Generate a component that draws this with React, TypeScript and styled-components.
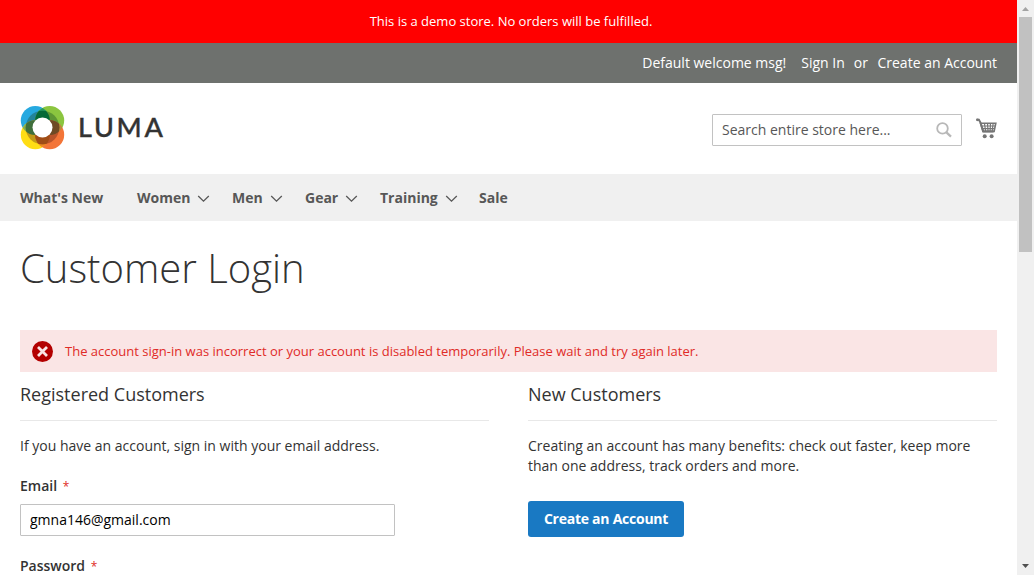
import React from "react";
import styled, { createGlobalStyle } from "styled-components";

const GlobalStyle = createGlobalStyle`
  *, *::before, *::after { box-sizing: border-box; }
  html, body { margin: 0; padding: 0; overflow: hidden; background: #fff; }
  body { font-family: "Open Sans", "Noto Sans", sans-serif; font-size: 14px; line-height: 20px; color: #333; }
  h1, h2, p { margin: 0; }
  svg { display: block; flex: none; }
`;

const Window = styled.div`
  display: flex;
  width: 1034px;
  height: 575px;
  overflow: hidden;
`;

const Page = styled.div`
  width: 1017px;
  flex: none;
`;

const DemoNotice = styled.div`
  height: 43px;
  background: #ff0000;
  color: #fff;
  font-size: 13px;
  line-height: 43px;
  text-align: center;
  padding-left: 5px;
`;

const AccountBar = styled.div`
  height: 40px;
  background: #6e716e;
  color: #fff;
  display: flex;
  justify-content: flex-end;
  padding: 10px 20px 0 0;
`;

const AccountItem = styled.span<{ $gap?: number }>`
  margin-left: ${(p) => p.$gap ?? 0}px;
  white-space: nowrap;
`;

const Header = styled.header`
  height: 91px;
  display: flex;
  align-items: flex-start;
  padding: 22px 20px 0;
`;

const Brand = styled.a`
  display: flex;
  align-items: center;
  height: 45px;
  flex: 1;
`;

const BrandName = styled.span`
  margin-left: 11px;
  font-family: Lato, sans-serif;
  font-size: 27px;
  font-weight: 500;
  line-height: 43px;
  height: 45px;
  letter-spacing: 2.7px;
  color: #333;
  -webkit-text-stroke: 0.4px #333;
`;

const SearchBox = styled.div`
  display: flex;
  align-items: center;
  justify-content: space-between;
  width: 250px;
  height: 32px;
  margin-top: 9px;
  padding: 0 9px;
  border: 1px solid #c2c2c2;
  border-radius: 1px;
  color: #575757;
`;

const CartLink = styled.a`
  margin: 13px 0 0 14px;
`;

const Nav = styled.nav`
  display: flex;
  height: 47px;
  padding: 14px 20px 0;
  background: #f0f0f0;
`;

const NavItem = styled.a<{ $width: number }>`
  display: flex;
  width: ${(p) => p.$width}px;
  font-weight: 700;
  color: #575757;
  white-space: nowrap;
  svg { margin: 7px 0 0 7px; }
`;

const Main = styled.main`
  padding: 25px 20px 0;
`;

const Title = styled.h1`
  height: 84px;
  font-size: 40px;
  line-height: 44px;
  font-weight: 300;
`;

const ErrorMessage = styled.div`
  display: flex;
  align-items: center;
  height: 42px;
  padding-left: 12px;
  gap: 12px;
  background: #fae5e5;
  color: #e02b27;
  font-size: 13px;
`;

const Columns = styled.div`
  display: flex;
  justify-content: space-between;
`;

const Block = styled.section`
  width: 469px;
`;

const BlockTitle = styled.h2`
  height: 49px;
  padding-top: 12px;
  border-bottom: 1px solid #e8e8e8;
  font-size: 18px;
  line-height: 20px;
  font-weight: 400;
`;

const Note = styled.p`
  padding-top: 15px;
  white-space: nowrap;
`;

const Label = styled.label`
  display: block;
  height: 20px;
  margin-top: 20px;
  font-weight: 600;
`;

const Required = styled.span`
  margin-left: 2px;
  font-size: 12px;
  line-height: 1;
  font-weight: 400;
  color: #e02b27;
`;

const Field = styled.input`
  display: block;
  width: 375px;
  height: 32px;
  margin-top: 8px;
  padding: 0 9px 1px;
  border: 1px solid #c2c2c2;
  border-radius: 1px;
  background: #fff;
  font: 14px "Open Sans", sans-serif;
  color: #000;
`;

const PrimaryButton = styled.button`
  width: 156px;
  height: 36px;
  margin-top: 25px;
  padding: 0 0 2px;
  border: 0;
  border-radius: 3px;
  background: #1979c3;
  color: #fff;
  font: 700 14px "Open Sans", sans-serif;
  letter-spacing: -0.25px;
`;

const Scrollbar = styled.div`
  width: 17px;
  height: 575px;
  padding: 6px 0 6px;
  display: flex;
  flex-direction: column;
  align-items: center;
  background: #f0f0f0;
`;

const Thumb = styled.div`
  width: 13px;
  height: 235px;
  margin: 6px 0 auto;
  background: #c1c1c1;
`;

const Logo = () => (
  <svg width="47" height="45" viewBox="0 0 47 45">
    <defs>
      <clipPath id="tl"><circle cx="15.3" cy="15.4" r="14.5" /></clipPath>
      <clipPath id="tr"><circle cx="29.7" cy="15.4" r="14.5" /></clipPath>
      <clipPath id="bl"><circle cx="15.3" cy="29.7" r="14.5" /></clipPath>
      <clipPath id="ring"><circle cx="22.5" cy="22.5" r="16.8" /></clipPath>
    </defs>
    <circle cx="15.3" cy="15.4" r="14.5" fill="#26a9e0" />
    <circle cx="29.7" cy="15.4" r="14.5" fill="#8bc53f" />
    <circle cx="15.3" cy="29.7" r="14.5" fill="#ffdd15" />
    <circle cx="29.7" cy="29.7" r="14.5" fill="#f37538" />
    <circle cx="29.7" cy="15.4" r="14.5" fill="#1f9a62" clipPath="url(#tl)" />
    <circle cx="15.3" cy="29.7" r="14.5" fill="#86b04e" clipPath="url(#tl)" />
    <circle cx="29.7" cy="29.7" r="14.5" fill="#b98a3c" clipPath="url(#tr)" />
    <circle cx="29.7" cy="29.7" r="14.5" fill="#ee8a22" clipPath="url(#bl)" />
    <g clipPath="url(#ring)">
      <circle cx="15.3" cy="15.4" r="14.5" fill="#23849a" />
      <circle cx="29.7" cy="15.4" r="14.5" fill="#5d9634" />
      <circle cx="15.3" cy="29.7" r="14.5" fill="#c29a17" />
      <circle cx="29.7" cy="29.7" r="14.5" fill="#b9542a" />
      <circle cx="29.7" cy="15.4" r="14.5" fill="#046a38" clipPath="url(#tl)" />
      <circle cx="15.3" cy="29.7" r="14.5" fill="#3f6f3c" clipPath="url(#tl)" />
      <circle cx="29.7" cy="29.7" r="14.5" fill="#6e4a24" clipPath="url(#tr)" />
      <circle cx="29.7" cy="29.7" r="14.5" fill="#a04d16" clipPath="url(#bl)" />
    </g>
    <circle cx="22.5" cy="22.5" r="10" fill="#fff" />
  </svg>
);

const SearchIcon = () => (
  <svg width="16" height="16" viewBox="0 0 16 16" fill="none" stroke="#b8b8b8">
    <circle cx="6.5" cy="6.4" r="5.3" strokeWidth="1.8" />
    <path d="M10.4 10.3l4.6 4.3" strokeWidth="2.3" />
  </svg>
);

const CartIcon = () => (
  <svg width="21" height="22" viewBox="0 0 21 22" fill="none" stroke="#757575">
    <path d="M0.5 1.8h2.4l1.6 2.8 2.9 9h10.2" strokeWidth="2" />
    <circle cx="1.5" cy="1.8" r="1.4" fill="#757575" stroke="none" />
    <path d="M4.5 5.2h15.3l-1.7 8.2H6.9z" strokeWidth="1.6" />
    <path d="M5 8h14M6 10.7h12.6M8.4 5l1.2 8M11.5 5l.5 8M14.5 5l-.4 8M17.2 5l-1 8" strokeWidth="1.2" />
    <circle cx="8.7" cy="18.3" r="2" fill="#757575" stroke="none" />
    <circle cx="15.6" cy="18.3" r="2" fill="#757575" stroke="none" />
  </svg>
);

const Chevron = () => (
  <svg width="13" height="8" viewBox="0 0 13 8" fill="none" stroke="#575757" strokeWidth="1.3">
    <path d="M1.2 1l5.3 5.2L11.8 1" />
  </svg>
);

const ErrorIcon = () => (
  <svg width="21" height="21" viewBox="0 0 21 21">
    <circle cx="10.5" cy="10.5" r="10.5" fill="#b30000" />
    <path d="M6 6l9 9M15 6l-9 9" stroke="#fae5e5" strokeWidth="2.8" />
  </svg>
);

const menu = [
  { name: "What's New", width: 117, sub: false },
  { name: "Women", width: 95, sub: true },
  { name: "Men", width: 73, sub: true },
  { name: "Gear", width: 75, sub: true },
  { name: "Training", width: 99, sub: true },
  { name: "Sale", width: 40, sub: false },
];

export default function App() {
  return (
    <>
      <GlobalStyle />
      <Window>
        <Page>
          <DemoNotice>This is a demo store. No orders will be fulfilled.</DemoNotice>
          <AccountBar>
            <AccountItem>Default welcome msg!</AccountItem>
            <AccountItem $gap={15}>Sign In</AccountItem>
            <AccountItem $gap={9}>or</AccountItem>
            <AccountItem $gap={9.5}>Create an Account</AccountItem>
          </AccountBar>
          <Header>
            <Brand>
              <Logo />
              <BrandName>LUMA</BrandName>
            </Brand>
            <SearchBox>
              <span>Search entire store here...</span>
              <SearchIcon />
            </SearchBox>
            <CartLink><CartIcon /></CartLink>
          </Header>
          <Nav>
            {menu.map((m) => (
              <NavItem key={m.name} $width={m.width}>
                {m.name}
                {m.sub && <Chevron />}
              </NavItem>
            ))}
          </Nav>
          <Main>
            <Title>Customer Login</Title>
            <ErrorMessage>
              <ErrorIcon />
              <span>
                The account sign-in was incorrect or your account is disabled temporarily. Please wait and try again later.
              </span>
            </ErrorMessage>
            <Columns>
              <Block>
                <BlockTitle>Registered Customers</BlockTitle>
                <Note>If you have an account, sign in with your email address.</Note>
                <Label>Email <Required>*</Required></Label>
                <Field defaultValue="gmna146@gmail.com" />
                <Label>Password <Required>*</Required></Label>
              </Block>
              <Block>
                <BlockTitle>New Customers</BlockTitle>
                <Note>
                  Creating an account has many benefits: check out faster, keep more
                  <br />
                  than one address, track orders and more.
                </Note>
                <PrimaryButton>Create an Account</PrimaryButton>
              </Block>
            </Columns>
          </Main>
        </Page>
        <Scrollbar>
          <svg width="9" height="5" viewBox="0 0 9 5"><path d="M1 5h7L4.5 1z" fill="#a3a3a3" /></svg>
          <Thumb />
          <svg width="9" height="5" viewBox="0 0 9 5"><path d="M1 0h7L4.5 4z" fill="#505050" /></svg>
        </Scrollbar>
      </Window>
    </>
  );
}
